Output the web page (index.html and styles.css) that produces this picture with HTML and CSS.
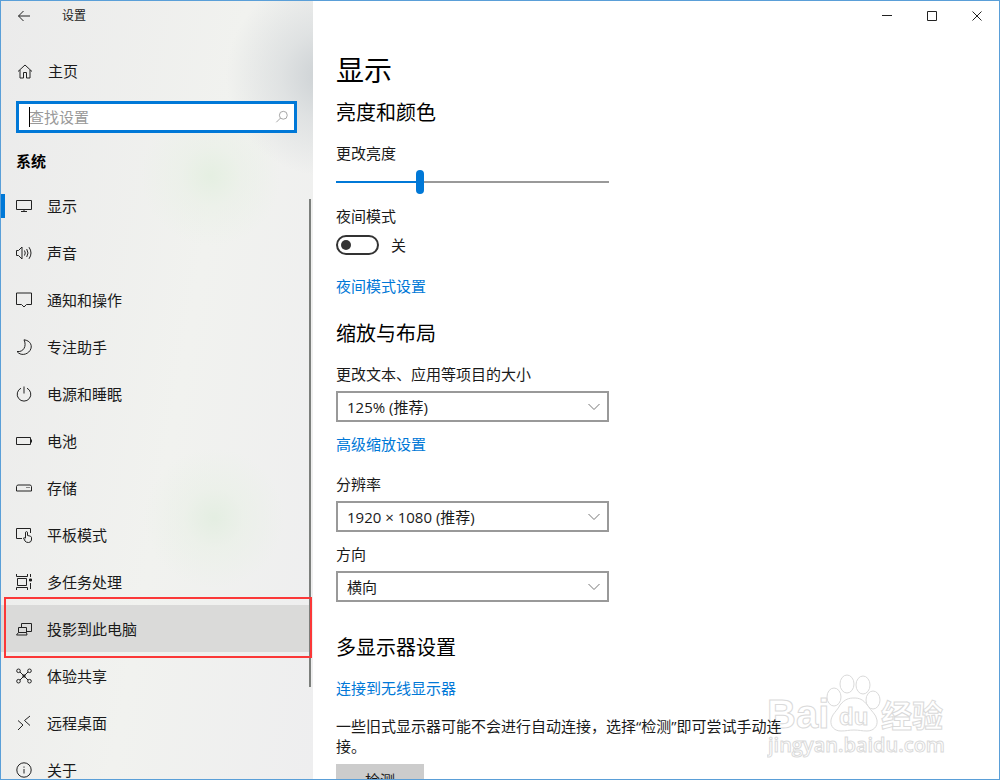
FILE: index.html
```html
<!DOCTYPE html>
<html lang="zh-CN">
<head>
  <meta charset="UTF-8">
  <meta name="viewport" content="width=device-width, initial-scale=1.0">
  <title>设置</title>
  <link rel="stylesheet" href="styles.css">
</head>
<body>
  <div class="window">
    <aside class="sidebar">
      <header class="titlebar">
        <button class="back" aria-label="返回">
          <svg class="icon" viewBox="0 0 16 16"><path d="M14 8H2.5M7.5 3 2.5 8l5 5"/></svg>
        </button>
        <span class="app-name">设置</span>
      </header>
      <a href="#" class="home">
        <svg class="icon" viewBox="0 0 16 16"><path d="M1 8.500 8 2l7 6.500M3 7v8h3.500V9.500h3V15H13V7"/></svg>
        主页
      </a>
      <div class="search">
        <input type="text" placeholder="查找设置" aria-label="查找设置">
        <span class="caret"></span>
        <svg class="icon" viewBox="0 0 16 16"><circle cx="9.500" cy="6" r="4.500"/><path d="M6.300 9.200 1.500 14"/></svg>
      </div>
      <h2 class="group">系统</h2>
      <nav class="nav">
        <a href="#" class="nav-item current">
          <svg class="icon" viewBox="0 0 16 16"><path d="M.5 2.500h15v9H.5zM8 11.500v2M5 13.500h6"/></svg>
          显示
        </a>
        <a href="#" class="nav-item">
          <svg class="icon" viewBox="0 0 16 16"><path d="M.5 5.500H2.500l3.500-3.500v12l-3.500-3.500h-2zM8.500 5.500q1.500 2.500 0 5M10.700 4q2.600 4 0 8M13 2.200q4 5.800 0 11.600"/></svg>
          声音
        </a>
        <a href="#" class="nav-item">
          <svg class="icon" viewBox="0 0 16 16"><path d="M.5 1h15v11.500h-5L8 15l-2.500-2.500h-5z"/></svg>
          通知和操作
        </a>
        <a href="#" class="nav-item">
          <svg class="icon" viewBox="0 0 16 16"><path d="M8 .8C14.500 1.500 17 7 14 11.500S4.500 17 1 12.500C7.500 13.500 11 7 8 .8z"/></svg>
          专注助手
        </a>
        <a href="#" class="nav-item">
          <svg class="icon" viewBox="0 0 16 16"><path d="M8 .5v7M5 2.200a6.800 6.800 0 1 0 6 0"/></svg>
          电源和睡眠
        </a>
        <a href="#" class="nav-item">
          <svg class="icon" viewBox="0 0 16 16"><path d="M.5 4.500h14v7H.5zM15.500 6.500v3"/></svg>
          电池
        </a>
        <a href="#" class="nav-item">
          <svg class="icon" viewBox="0 0 16 16"><path d="M1.500 5h13l1 1.500v4.500H.5V6.500zM10.500 7.500h1M12.500 7.500h1"/></svg>
          存储
        </a>
        <a href="#" class="nav-item">
          <svg class="icon" viewBox="0 0 16 16"><path d="M6 11.500H.5v-10h14V6M9.500 11V5.200q1-1.200 2 0V8.500l3 .7 1 1V13q-.5 2.500-3 2.500-2.500 0-3.500-1.500L7.500 11q.5-1.200 2 .8"/></svg>
          平板模式
        </a>
        <a href="#" class="nav-item">
          <svg class="icon" viewBox="0 0 16 16"><path d="M1.500 4.500h9v7h-9zM.5 0v2.500h11V0M.5 16v-2.500h11V16M14.500 0v3M14.500 9v6"/><path class="solid" d="M13.500 5h2v2h-2z"/></svg>
          多任务处理
        </a>
        <a href="#" class="nav-item hover marked">
          <svg class="icon" viewBox="0 0 16 16"><path d="M5.500 6.500v-4h10v8h-5M2.500 6.500h8v5h-8zM2.500 11.500l-2 2.500H11l-.5-2.500"/></svg>
          投影到此电脑
        </a>
        <a href="#" class="nav-item">
          <svg class="icon" viewBox="0 0 16 16"><path d="m4 4 8 8M12 4l-8 8"/><circle cx="2.500" cy="2.800" r="1.800"/><circle cx="13.500" cy="2.800" r="1.800"/><circle cx="2.500" cy="13.200" r="1.800"/><circle cx="13.500" cy="13.200" r="1.800"/><circle cx="8" cy="8" r="1.200"/></svg>
          体验共享
        </a>
        <a href="#" class="nav-item">
          <svg class="icon" viewBox="0 0 16 16"><path d="m2 5.500 5 4.500-5 5M14 1 8.500 5.500 14 10.500"/></svg>
          远程桌面
        </a>
        <a href="#" class="nav-item">
          <svg class="icon" viewBox="0 0 16 16"><circle cx="8" cy="8" r="7.200"/><path d="M8 7v4.500M8 4.500v1.200"/></svg>
          关于
        </a>
        <span class="scroll-thumb"></span>
      </nav>
    </aside>

    <div class="content">
      <div class="window-buttons">
        <button aria-label="最小化"><svg viewBox="0 0 10 10"><path d="M0 4.500h10"/></svg></button>
        <button aria-label="最大化"><svg viewBox="0 0 10 10"><path d="M.5.500h9v9h-9z"/></svg></button>
        <button aria-label="关闭"><svg viewBox="0 0 10 10"><path d="m.5.500 9 9M9.500.500l-9 9"/></svg></button>
      </div>

      <main>
        <h1>显示</h1>

        <section>
          <h2>亮度和颜色</h2>
          <label for="brightness">更改亮度</label>
          <input type="range" id="brightness" class="slider" min="0" max="100" value="30">
          <label for="night">夜间模式</label>
          <div class="toggle-row">
            <input type="checkbox" id="night" class="toggle">
            <span>关</span>
          </div>
          <a href="#">夜间模式设置</a>
        </section>

        <section>
          <h2>缩放与布局</h2>
          <label for="scale">更改文本、应用等项目的大小</label>
          <div class="select">
            <select id="scale"><option>125% (推荐)</option></select>
            <svg viewBox="0 0 12 8"><path d="m.5 1 5.500 5.500L11.500 1"/></svg>
          </div>
          <a href="#">高级缩放设置</a>
          <label for="resolution" class="spaced">分辨率</label>
          <div class="select">
            <select id="resolution"><option>1920 × 1080 (推荐)</option></select>
            <svg viewBox="0 0 12 8"><path d="m.5 1 5.500 5.500L11.500 1"/></svg>
          </div>
          <label for="orientation">方向</label>
          <div class="select">
            <select id="orientation"><option>横向</option></select>
            <svg viewBox="0 0 12 8"><path d="m.5 1 5.500 5.500L11.500 1"/></svg>
          </div>
        </section>

        <section class="displays">
          <h2>多显示器设置</h2>
          <a href="#">连接到无线显示器</a>
          <p>一些旧式显示器可能不会进行自动连接，选择“检测”即可尝试手动连接。</p>
          <button class="detect">检测</button>
        </section>
      </main>

      <svg class="watermark" viewBox="0 0 180 92">
        <text x="0" y="57" class="brand">Bai</text>
        <g>
          <ellipse cx="67" cy="26" rx="7" ry="9"/>
          <ellipse cx="80" cy="13" rx="7" ry="9"/>
          <ellipse cx="96" cy="14" rx="7" ry="9"/>
          <ellipse cx="106" cy="29" rx="7" ry="9"/>
          <path d="M73 34C78 28 82 27 87 27s9 1 14 8c3 5 8 8 9 14 1 7-4 11-10 11-5 0-8-1-13-1s-8 1-13 1c-6 0-11-4-10-11 1-6 6-9 9-15z"/>
        </g>
        <text x="72" y="54" class="du">du</text>
        <text x="114" y="56" class="jingyan">经验</text>
        <text x="1" y="81" class="domain">jingyan.baidu.com</text>
      </svg>
    </div>
  </div>
</body>
</html>
```
FILE: styles.css
```css
* {
  box-sizing: border-box;
}
body {
  margin: 0;
  font-family: "Open Sans", "Noto Sans CJK SC", sans-serif;
  font-size: 15px;
  line-height: 20px;
  color: #1a1a1a;
}
h1, h2, p {
  margin: 0;
  font-weight: 400;
}
a {
  color: #0078d7;
  text-decoration: none;
}
button {
  padding: 0;
  border: none;
  background: none;
  font: inherit;
  color: inherit;
}
svg {
  fill: none;
  stroke: #222;
}
.window {
  display: grid;
  grid-template-columns: 312px 1fr;
  height: 100vh;
  border: 1px solid #5a9fd8;
  overflow: hidden;
  background: #fff;
}
.icon {
  flex: none;
  width: 16px;
  height: 16px;
}
.solid {
  fill: #222;
}

/* sidebar */
.sidebar {
  min-height: 0;
  padding-right: 1px;
  background:
    radial-gradient(circle at 325px 75px, #cbd0d3 0, rgba(212, 216, 218, 0.6) 45px, rgba(230, 232, 232, 0) 100px),
    radial-gradient(circle at 210px 175px, #e5efe2 0, rgba(232, 240, 229, 0.5) 30px, rgba(238, 241, 236, 0) 70px),
    radial-gradient(circle at 213px 517px, #e4eee2 0, rgba(232, 240, 229, 0.5) 30px, rgba(238, 241, 236, 0) 70px),
    linear-gradient(100deg, #ebebeb, #f1f2ef 55%, #eeeeef);
}
.titlebar {
  display: flex;
  align-items: center;
  gap: 30px;
  height: 30px;
  padding-left: 15px;
  font-size: 12px;
}
.back {
  display: flex;
}
.home {
  display: flex;
  align-items: center;
  gap: 15px;
  height: 40px;
  margin-top: 20px;
  padding-left: 16px;
  color: #1a1a1a;
}
.search {
  position: relative;
  display: flex;
  align-items: center;
  height: 32px;
  margin: 10px 15px 0;
  padding: 0 5px 0 10px;
  border: 3px solid #0078d7;
  background: #fff;
}
.search input {
  flex: 1;
  min-width: 0;
  padding: 0;
  border: none;
  outline: none;
  background: none;
  font: inherit;
}
.search input::placeholder {
  color: #999;
}
.caret {
  position: absolute;
  left: 10px;
  width: 1px;
  height: 20px;
  background: #000;
}
.search .icon {
  width: 14px;
  height: 14px;
  stroke: #999;
}
.group {
  margin: 18px 15px 11px;
  font-size: 15px;
  font-weight: 700;
  color: #000;
}
.nav {
  position: relative;
}
.nav-item {
  position: relative;
  display: flex;
  align-items: center;
  gap: 15px;
  height: 47px;
  padding-left: 15px;
  color: #1a1a1a;
}
.nav-item.current::before {
  content: "";
  position: absolute;
  left: 0;
  width: 4px;
  height: 24px;
  background: #0078d7;
}
.nav-item.hover {
  background: #dadad9;
}
.nav-item.marked::after {
  content: "";
  position: absolute;
  inset: -8px 0 -6px 3px;
  border: 2px solid #fb3838;
  z-index: 1;
}
.scroll-thumb {
  position: absolute;
  top: 17px;
  right: 1px;
  width: 2px;
  height: 488px;
  background: #7c7f7c;
}

/* content */
.content {
  position: relative;
  min-width: 0;
  min-height: 0;
}
.window-buttons {
  display: flex;
  justify-content: flex-end;
}
.window-buttons button {
  display: flex;
  align-items: center;
  justify-content: center;
  width: 45px;
  height: 30px;
}
.window-buttons svg {
  width: 10px;
  height: 10px;
}
main {
  position: relative;
  z-index: 1;
  max-width: 500px;
  padding: 21px 24px 0 23px;
}
h1 {
  font-size: 28px;
  line-height: 36px;
  margin-bottom: 11px;
  color: #000;
}
main h2 {
  font-size: 20px;
  line-height: 28px;
  margin-bottom: 16px;
  color: #000;
}
section {
  margin-bottom: 24px;
}
section > label, section > a {
  display: block;
  width: fit-content;
}
.slider {
  appearance: none;
  display: block;
  width: 273px;
  height: 24px;
  margin: 7px 0 12px;
  background: linear-gradient(#0078d7, #0078d7) 0 50% / 30% 2px no-repeat,
    linear-gradient(#999, #999) 0 50% / 100% 2px no-repeat;
}
.slider::-webkit-slider-thumb {
  appearance: none;
  width: 8px;
  height: 24px;
  border-radius: 4px;
  background: #0078d7;
}
.toggle-row {
  display: flex;
  align-items: center;
  gap: 12px;
  margin: 9px 0 21px;
}
.toggle {
  appearance: none;
  display: flex;
  align-items: center;
  width: 43px;
  height: 20px;
  margin: 0;
  padding: 0 3px;
  border: 2px solid #333;
  border-radius: 10px;
}
.toggle::before {
  content: "";
  width: 10px;
  height: 10px;
  border-radius: 50%;
  background: #333;
}
.toggle:checked {
  justify-content: flex-end;
}
.select {
  position: relative;
  width: 273px;
  margin: 7px 0 12px;
}
.select select {
  appearance: none;
  display: block;
  width: 100%;
  height: 31px;
  padding: 0 30px 0 9px;
  border: 2px solid #999;
  border-radius: 0;
  background: #fff;
  font: inherit;
  color: inherit;
}
.select svg {
  position: absolute;
  top: 12px;
  right: 9px;
  width: 12px;
  height: 8px;
  stroke: #777;
  pointer-events: none;
}
.spaced {
  margin-top: 20px;
}
.displays {
  margin-top: 32px;
}
.displays p {
  margin: 18px 0 8px;
}
.detect {
  width: 88px;
  height: 32px;
  background: #ccc;
}

/* site mark in the corner */
.watermark {
  position: absolute;
  right: 52px;
  bottom: 16px;
  width: 180px;
  height: 92px;
  fill: #fff;
  stroke: #dadada;
}
.watermark text {
  font-family: "Liberation Sans", "Noto Sans CJK SC", sans-serif;
  font-weight: 700;
}
.watermark .brand {
  font-size: 40px;
}
.watermark .du {
  font-size: 24px;
}
.watermark .jingyan {
  font-size: 31px;
}
.watermark .domain {
  font-family: "Open Sans", sans-serif;
  font-size: 20px;
  font-weight: 600;
}
```
